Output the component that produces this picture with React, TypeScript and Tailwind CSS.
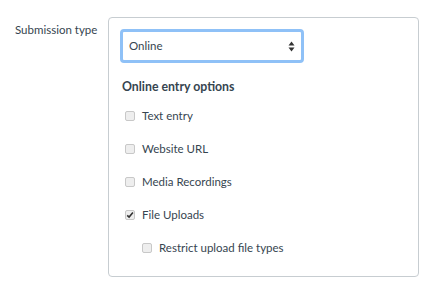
const options = [
  { label: "Text entry", checked: false },
  { label: "Website URL", checked: false },
  { label: "Media Recordings", checked: false },
  { label: "File Uploads", checked: true },
];

function Checkbox({ checked }: { checked?: boolean }) {
  return (
    <span className="shrink-0 size-[10px] rounded-[2px] border border-[#c8c8c8] bg-[#eeeeee] flex items-center justify-center">
      {checked && (
        <svg width="8" height="8" viewBox="0 0 8 8">
          <path d="M1.2 4.3 L3.1 6.1 L6.9 1.6" fill="none" stroke="#333" strokeWidth="1.6" />
        </svg>
      )}
    </span>
  );
}

export default function App() {
  return (
    <div className="w-[430px] h-[288px] bg-white flex pt-[17px] font-['Lato','Noto_Sans',sans-serif] text-[#364550]">
      <div className="w-[108px] shrink-0 pl-[15px] pt-[5px] text-[11.5px] leading-[16px] whitespace-nowrap">
        Submission type
      </div>

      <div className="w-[311px] h-[260px] border border-[#c7cdd1] rounded-[4px] px-[11px] pt-[11px]">
        <div className="w-[184px] h-[34px] rounded-[4px] border-[3px] border-[#8fc1f7] flex items-center justify-between pl-[6px] pr-[6px] text-[11.5px]">
          <span>Online</span>
          <svg width="7" height="11" viewBox="0 0 7 11">
            <path d="M3.5 0.5 L6.5 4.5 L0.5 4.5 Z" fill="#333" />
            <path d="M3.5 10.5 L6.5 6.5 L0.5 6.5 Z" fill="#333" />
          </svg>
        </div>

        <div className="mt-[16px] pl-[2px] text-[12.3px] font-bold leading-[16px]">Online entry options</div>

        <div className="flex flex-col pt-[13px] gap-[17px] pl-[5px]">
          {options.map((o) => (
            <div key={o.label} className="flex items-center gap-[7px] text-[11.5px] leading-[16px] h-[16px]">
              <Checkbox checked={o.checked} />
              <span>{o.label}</span>
            </div>
          ))}
          <div className="flex items-center gap-[7px] text-[11.5px] leading-[16px] h-[16px] pl-[17px]">
            <Checkbox />
            <span>Restrict upload file types</span>
          </div>
        </div>
      </div>
    </div>
  );
}
